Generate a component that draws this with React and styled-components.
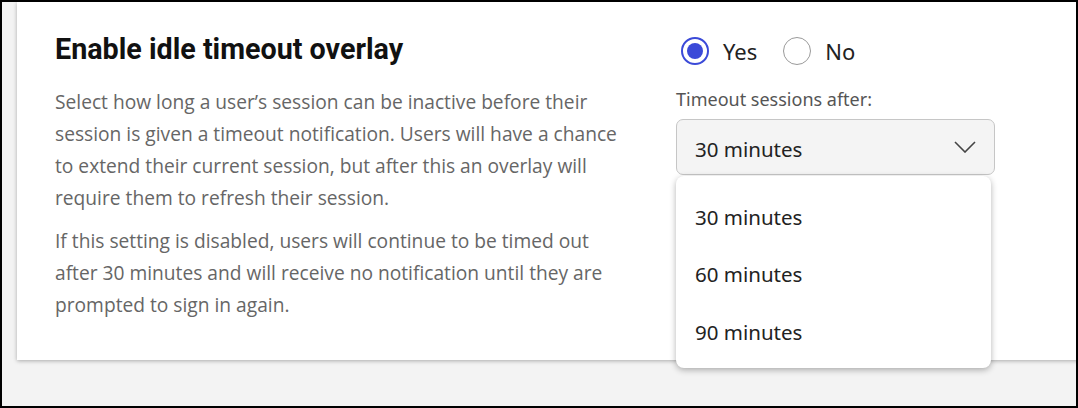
import React from 'react'
import styled, { createGlobalStyle } from 'styled-components'

const GlobalStyle = createGlobalStyle`
  html, body {
    margin: 0;
    padding: 0;
  }
  * {
    box-sizing: border-box;
  }
`

const Frame = styled.div`
  width: 1078px;
  height: 408px;
  border: 2px solid #000;
  background: #f3f3f3;
  overflow: hidden;
`

const Card = styled.section`
  position: relative;
  margin: 0 -20px 0 15px;
  height: 358px;
  background: #fff;
  box-shadow: 0 1px 4px rgba(0, 0, 0, 0.3);
  display: grid;
  grid-template-columns: 570px 320px;
  column-gap: 51px;
  padding: 27px 0 0 38px;
`

const Title = styled.h2`
  margin: 0 0 17px;
  font-family: Roboto, sans-serif;
  font-weight: 700;
  font-size: 28.7px;
  line-height: 40px;
  color: #111;
`

const Text = styled.p`
  margin: 0 0 11px;
  font-family: 'Open Sans', sans-serif;
  font-size: 19.2px;
  line-height: 32px;
  color: #666;
`

const Side = styled.div`
  position: relative;
  margin-top: -1px;
  font-family: 'Noto Sans', sans-serif;
`

const RadioRow = styled.div`
  display: flex;
  align-items: center;
  gap: 26px;
  margin-left: 5px;
  margin-top: 8px;
`

const Option = styled.label`
  display: flex;
  align-items: center;
  gap: 14px;
  font-size: 22px;
  color: #222;
`

const Circle = styled.span`
  width: 28px;
  height: 28px;
  border-radius: 50%;
  border: ${p => (p.$checked ? '2px solid #3b4ad8' : '1.5px solid #9a9a9a')};
  display: flex;
  align-items: center;
  justify-content: center;
  &::after {
    content: '';
    display: ${p => (p.$checked ? 'block' : 'none')};
    width: 16px;
    height: 16px;
    border-radius: 50%;
    background: #3b4ad8;
  }
`

const FieldLabel = styled.div`
  margin-top: 21px;
  font-size: 18px;
  color: #555;
`

const Select = styled.div`
  margin-top: 8px;
  width: 319px;
  height: 56px;
  border: 1px solid #c6c6c6;
  border-radius: 7px;
  background: #f4f4f4;
  display: flex;
  align-items: center;
  justify-content: space-between;
  padding: 0 18px 0 18px;
  font-size: 20.5px;
  color: #222;
`

const SelectValue = styled.span`
  padding-top: 4px;
`

const Menu = styled.ul`
  position: absolute;
  left: 0;
  top: 148px;
  width: 315px;
  margin: 0;
  padding: 12px 0 7px;
  list-style: none;
  background: #fff;
  border-radius: 8px;
  box-shadow: 0 2px 6px rgba(0, 0, 0, 0.3);
  z-index: 2;
`

const Item = styled.li`
  height: 57.5px;
  display: flex;
  align-items: center;
  padding-left: 19px;
  font-size: 20.5px;
  color: #222;
`

const Chevron = () => (
  <svg width="22" height="12" viewBox="0 0 22 12" fill="none">
    <path d="M1 1l10 10L21 1" stroke="#444" strokeWidth="1.6" />
  </svg>
)

const App = () => (
  <Frame>
    <GlobalStyle />
    <Card>
      <div>
        <Title>Enable idle timeout overlay</Title>
        <Text>
          Select how long a user’s session can be inactive before their session is given a
          timeout notification. Users will have a chance to extend their current session, but
          after this an overlay will require them to refresh their session.
        </Text>
        <Text>
          If this setting is disabled, users will continue to be timed out after 30 minutes and
          will receive no notification until they are prompted to sign in again.
        </Text>
      </div>
      <Side>
        <RadioRow>
          <Option><Circle $checked />Yes</Option>
          <Option><Circle />No</Option>
        </RadioRow>
        <FieldLabel>Timeout sessions after:</FieldLabel>
        <Select>
          <SelectValue>30 minutes</SelectValue>
          <Chevron />
        </Select>
        <Menu>
          {['30 minutes', '60 minutes', '90 minutes'].map(m => (
            <Item key={m}>{m}</Item>
          ))}
        </Menu>
      </Side>
    </Card>
  </Frame>
)

export default App
